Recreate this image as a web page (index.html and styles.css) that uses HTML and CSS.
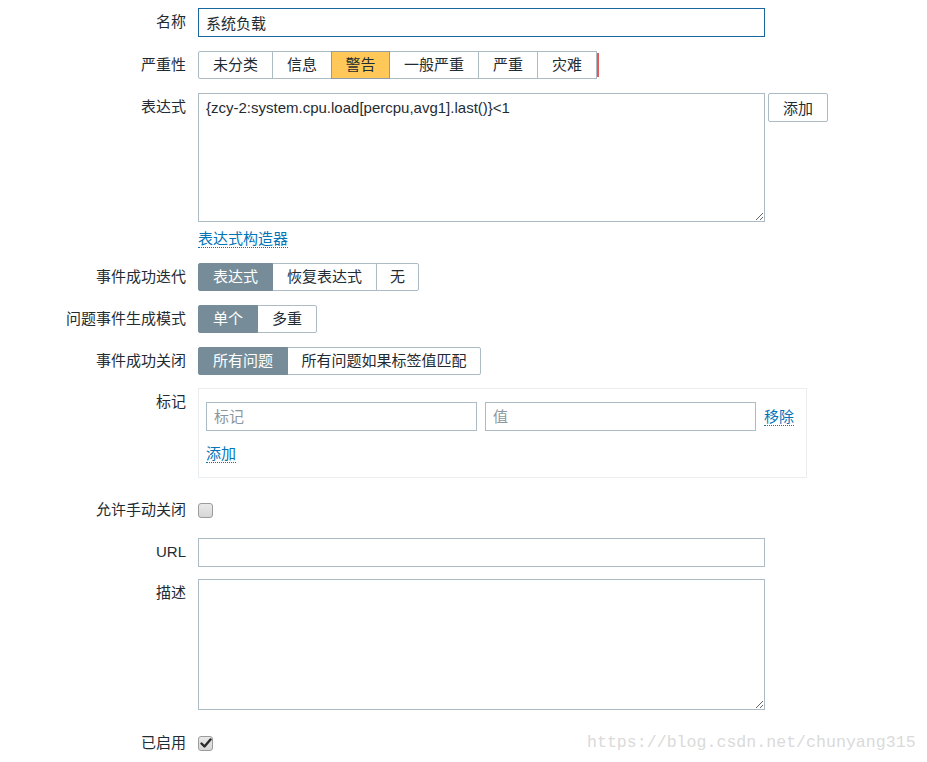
FILE: index.html
```html
<!DOCTYPE html>
<html lang="zh">
<head>
<meta charset="utf-8">
<title>触发器</title>
<link rel="stylesheet" href="styles.css">
</head>
<body>
<div class="form">
  <div class="row r-name">
    <div class="label">名称</div>
    <div class="field"><input class="text focus" type="text" value="系统负载"></div>
  </div>

  <div class="row r-sev">
    <div class="label">严重性</div>
    <div class="field">
      <div class="seg">
        <span class="btn">未分类</span><span class="btn">信息</span><span class="btn warn">警告</span><span class="btn">一般严重</span><span class="btn">严重</span><span class="btn">灾难</span><span class="redbar"></span>
      </div>
    </div>
  </div>

  <div class="row r-expr">
    <div class="label">表达式</div>
    <div class="field expr">
      <textarea class="area">{zcy-2:system.cpu.load[percpu,avg1].last()}&lt;1</textarea>
      <span class="button">添加</span>
    </div>
  </div>

  <div class="row r-link">
    <div class="label"></div>
    <div class="field"><a class="link">表达式构造器</a></div>
  </div>

  <div class="row r-iter">
    <div class="label">事件成功迭代</div>
    <div class="field">
      <div class="seg"><span class="btn on">表达式</span><span class="btn">恢复表达式</span><span class="btn narrow">无</span></div>
    </div>
  </div>

  <div class="row r-mode">
    <div class="label">问题事件生成模式</div>
    <div class="field">
      <div class="seg"><span class="btn on">单个</span><span class="btn">多重</span></div>
    </div>
  </div>

  <div class="row r-close">
    <div class="label">事件成功关闭</div>
    <div class="field">
      <div class="seg"><span class="btn on">所有问题</span><span class="btn wide">所有问题如果标签值匹配</span></div>
    </div>
  </div>

  <div class="row r-tags">
    <div class="label">标记</div>
    <div class="field">
      <div class="tagbox">
        <div class="tagline">
          <input class="text tag" type="text" placeholder="标记">
          <input class="text tag" type="text" placeholder="值">
          <a class="link">移除</a>
        </div>
        <div class="tagadd"><a class="link">添加</a></div>
      </div>
    </div>
  </div>

  <div class="row r-manual">
    <div class="label">允许手动关闭</div>
    <div class="field center"><span class="check"></span></div>
  </div>

  <div class="row r-url">
    <div class="label">URL</div>
    <div class="field"><input class="text" type="text"></div>
  </div>

  <div class="row r-desc">
    <div class="label">描述</div>
    <div class="field"><textarea class="area desc"></textarea></div>
  </div>

  <div class="row r-enabled">
    <div class="label">已启用</div>
    <div class="field center">
      <span class="check checked"><svg width="12" height="12" viewBox="0 0 12 12"><path d="M1.5 6.5 L4.5 9.5 L10.5 2.5" fill="none" stroke="#2a2a2a" stroke-width="2.4" stroke-linecap="round" stroke-linejoin="round"/></svg></span>
    </div>
  </div>
</div>
<div class="watermark">https://blog.csdn.net/chunyang315</div>
</body>
</html>
```

FILE: styles.css
```css
html, body {
  margin: 0;
  padding: 0;
  background: #ffffff;
}
body {
  font-family: "Liberation Sans", "Noto Sans CJK SC", sans-serif;
  font-size: 15px;
  color: #1f2c33;
  position: relative;
  width: 927px;
  height: 762px;
  overflow: hidden;
}
.form {
  display: flex;
  flex-direction: column;
  padding-top: 8px;
}
.row {
  display: grid;
  grid-template-columns: 186px 1fr;
  column-gap: 12px;
  margin-top: 14px;
}
.r-name { margin-top: 0; }
.r-link { margin-top: 8px; }
.r-iter { margin-top: 15px; }
.r-tags { margin-top: 13px; }
.r-manual { margin-top: 18px; }
.r-url { margin-top: 14px; }
.r-desc { margin-top: 12px; }
.r-enabled { margin-top: 19px; }

.label {
  text-align: right;
  line-height: 28px;
  height: 28px;
  white-space: nowrap;
}
.r-link .label {
  height: 18px;
}
.field {
  display: flex;
  align-items: flex-start;
}
.field.center {
  align-items: center;
  height: 28px;
}
.text {
  box-sizing: border-box;
  width: 567px;
  height: 29px;
  border: 1px solid #acbbc4;
  border-radius: 0;
  padding: 0 7px;
  margin: 0;
  font-family: "Liberation Sans", "Noto Sans CJK SC", sans-serif;
  font-size: 15px;
  color: #1f2c33;
  background: #fff;
  outline: none;
}
.text.focus {
  border-color: #1a67a0;
}
.text::placeholder {
  color: #8c979d;
}
.area {
  box-sizing: border-box;
  width: 567px;
  height: 129px;
  border: 1px solid #acbbc4;
  padding: 4px 7px;
  margin: 0;
  font-family: "Liberation Sans", "Noto Sans CJK SC", sans-serif;
  font-size: 15px;
  line-height: 20px;
  color: #1f2c33;
  background: #fff;
  outline: none;
  resize: both;
  display: block;
}
.area.desc {
  height: 131px;
}
.expr {
  gap: 3px;
}
.button {
  box-sizing: border-box;
  height: 29px;
  width: 60px;
  border: 1px solid #acbbc4;
  border-radius: 2px;
  background: #fff;
  display: flex;
  align-items: center;
  justify-content: center;
}
.seg {
  display: flex;
  align-items: center;
}
.btn {
  box-sizing: border-box;
  height: 28px;
  line-height: 26px;
  padding: 0 14px;
  border: 1px solid #acbbc4;
  background: #fff;
  margin-left: -1px;
  white-space: nowrap;
}
.btn:first-child {
  margin-left: 0;
  border-radius: 2px 0 0 2px;
}
.btn:last-of-type {
  border-radius: 0 2px 2px 0;
}
.btn.narrow {
  padding: 0 13px;
}
.btn.wide {
  padding: 0 13.5px;
}
.btn.warn {
  padding: 0 13.5px;
  background: #ffc859;
  border-color: #8d9ca6;
  position: relative;
  z-index: 1;
}
.btn.on {
  background: #768d99;
  border-color: #768d99;
  color: #fff;
  position: relative;
  z-index: 1;
}
.redbar {
  display: block;
  width: 2px;
  height: 24px;
  margin-left: 0;
  background: #e45959;
}
.link {
  color: #0275b8;
  text-decoration: none;
  border-bottom: 1px dotted #0275b8;
  line-height: 17px;
  cursor: pointer;
}
.r-link .field {
  height: 18px;
}
.tagbox {
  box-sizing: border-box;
  width: 609px;
  height: 90px;
  border: 1px solid #ebeef0;
  padding: 13px 7px 0 7px;
}
.tagline {
  display: flex;
  align-items: center;
  gap: 8px;
}
.text.tag {
  width: 271px;
  height: 29px;
}
.tagline .link {
  margin-top: 1px;
}
.tagadd {
  margin-top: 14px;
  height: 18px;
}
.check {
  box-sizing: border-box;
  width: 15px;
  height: 15px;
  border: 1px solid #9c9c9c;
  border-radius: 3px;
  background: linear-gradient(#e9e9e9, #d6d6d6);
  display: flex;
  align-items: center;
  justify-content: center;
}
.watermark {
  position: absolute;
  left: 587px;
  top: 733px;
  font-family: "Liberation Mono", monospace;
  font-size: 16.6px;
  color: #dadada;
  white-space: nowrap;
}
```
